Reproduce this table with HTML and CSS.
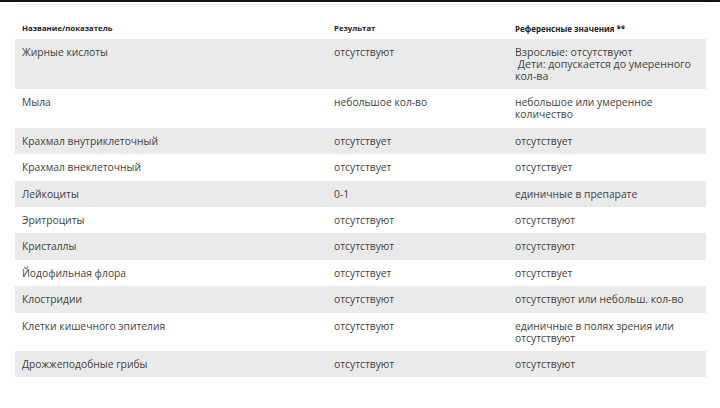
FILE: index.html
```html
<!DOCTYPE html>
<html lang="ru">
<head>
<meta charset="utf-8">
<link rel="stylesheet" href="styles.css">
</head>
<body>
<div class="topbar"></div>
<div class="wrap">
  <table class="results">
    <thead>
      <tr>
        <th class="c1">Название/показатель</th>
        <th class="c2">Результат</th>
        <th class="c3">Референсные значения **</th>
      </tr>
    </thead>
    <tbody>
      <tr class="alt"><td>Жирные кислоты</td><td>отсутствуют</td><td><span class="big">Взрослые: отсутствуют
&nbsp;Дети: допускается до умеренного кол-ва</span></td></tr>
      <tr><td>Мыла</td><td>небольшое кол-во</td><td>небольшое или умеренное количество</td></tr>
      <tr class="alt"><td>Крахмал внутриклеточный</td><td>отсутствует</td><td>отсутствует</td></tr>
      <tr><td>Крахмал внеклеточный</td><td>отсутствует</td><td>отсутствует</td></tr>
      <tr class="alt"><td>Лейкоциты</td><td>0-1</td><td>единичные в препарате</td></tr>
      <tr><td>Эритроциты</td><td>отсутствуют</td><td>отсутствуют</td></tr>
      <tr class="alt"><td>Кристаллы</td><td>отсутствуют</td><td>отсутствуют</td></tr>
      <tr><td>Йодофильная флора</td><td>отсутствует</td><td>отсутствует</td></tr>
      <tr class="alt"><td>Клостридии</td><td>отсутствуют</td><td>отсутствуют или небольш. кол-во</td></tr>
      <tr><td>Клетки кишечного эпителия</td><td>отсутствуют</td><td>единичные в полях зрения или отсутствуют</td></tr>
      <tr class="alt"><td>Дрожжеподобные грибы</td><td>отсутствуют</td><td>отсутствуют</td></tr>
    </tbody>
  </table>
</div>
</body>
</html>
```
FILE: styles.css
```css
html, body {
  margin: 0;
  padding: 0;
  background: #ffffff;
}
body {
  font-family: "Open Sans", "Noto Sans", sans-serif;
  color: #424242;
}
.topbar {
  height: 2px;
  background: #111111;
}
.wrap {
  padding: 2px 14px 0 15px;
}
.results {
  width: 691px;
  border-collapse: collapse;
  border-top: 1px solid #f0f0f0;
  table-layout: fixed;
}
.results th {
  text-align: left;
  font-size: 7.8px;
  font-weight: 700;
  color: #222222;
  padding: 19px 7px 6px 7px;
  line-height: 9px;
}
.results th.c1 { width: 298px; }
.results th.c2 { width: 167px; }
.results th.c3 { width: 184px; font-size: 8px; }
.results td {
  font-size: 10.3px;
  line-height: 12px;
  padding: 7px 7px 7.4px 7px;
  vertical-align: top;
}
.results td .big {
  display: block;
  font-size: 10.6px;
  line-height: 12px;
  white-space: pre-line;
}
.results tr.alt td {
  background: #eaeaea;
}
```
